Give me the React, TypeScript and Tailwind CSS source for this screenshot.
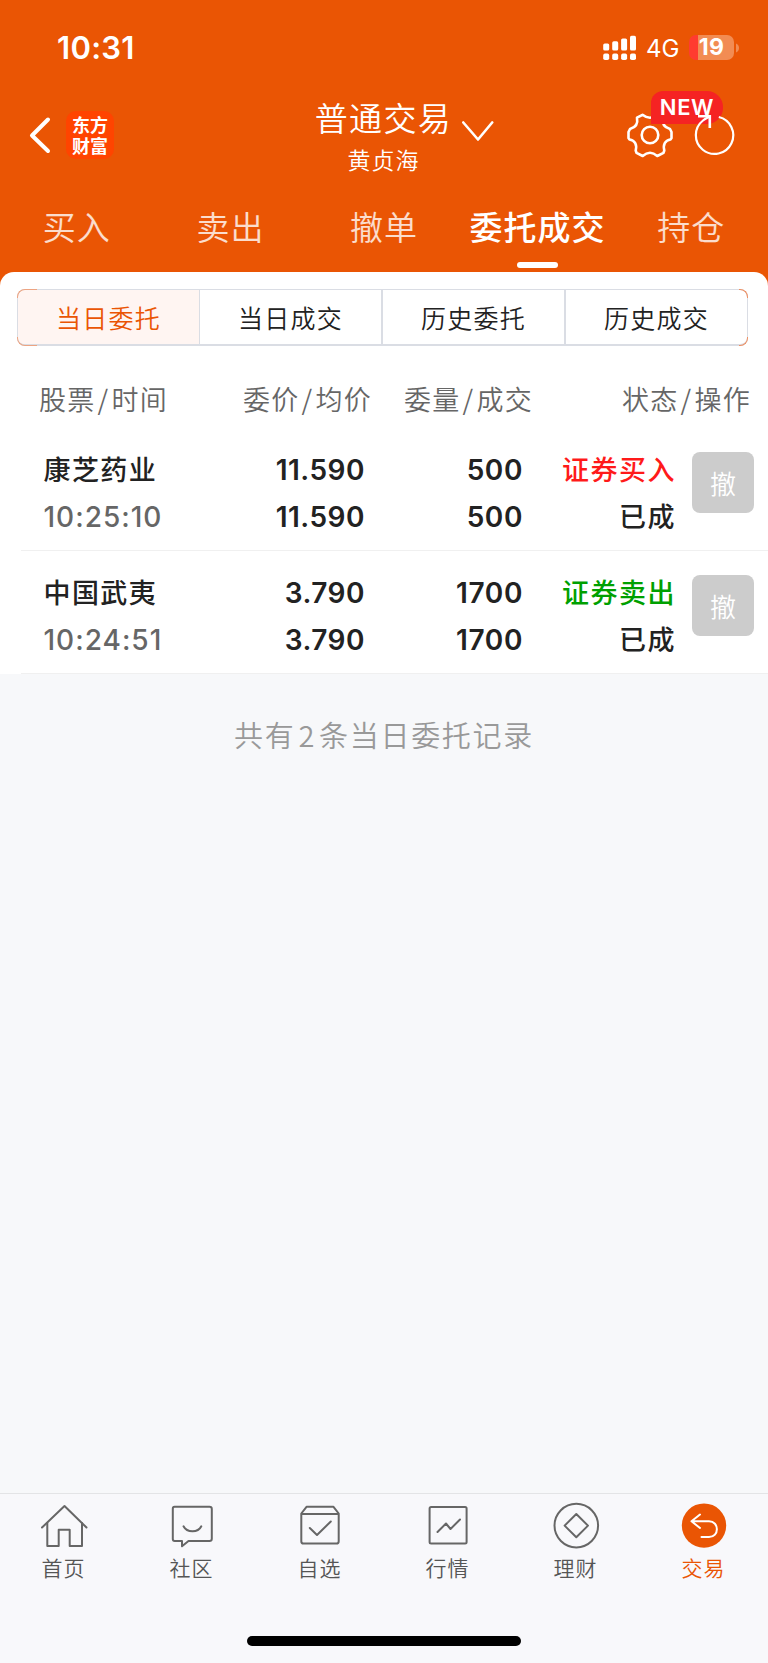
import React from "react";

const cjk = "font-['Noto_Sans_CJK_SC','Noto_Sans_CJK_TC',sans-serif]";
const latin = "font-['Inter','Noto_Sans_CJK_SC',sans-serif]";

function StatusBar() {
  return (
    <div className="flex h-[92px] items-start justify-between pl-[57px] pr-[29px] pt-[30px]">
      <span className={`${latin} text-[31px] leading-[36px] font-semibold tracking-[0.3px]`}>10:31</span>
      <div className="flex h-[36px] items-center">
        <svg className="block" width="34" height="26" viewBox="0 0 34 26" fill="#fff">
          <rect x="0.2" y="8.5" width="6" height="7" rx="1.6" />
          <rect x="9.2" y="6.3" width="6" height="9.2" rx="1.6" />
          <rect x="18.1" y="3.4" width="6" height="12.1" rx="1.6" />
          <rect x="27" y="0.8" width="6" height="14.7" rx="1.6" />
          <rect x="0.2" y="18.6" width="6" height="6.4" rx="1.8" />
          <rect x="9.2" y="18.6" width="6" height="6.4" rx="1.8" />
          <rect x="18.1" y="18.6" width="6" height="6.4" rx="1.8" />
          <rect x="27" y="18.6" width="6" height="6.4" rx="1.8" />
        </svg>
        <span className={`${latin} ml-[9px] mt-[2px] w-[35px] text-[24px] leading-[36px]`}>4G</span>
        <div className="ml-[8px] mb-[1px] flex h-[25px] w-[45px] items-center justify-center rounded-[7px] bg-[linear-gradient(90deg,#ff3b30_0_9px,#f28c53_9px)]">
          <span className={`${latin} text-[23px] leading-[25px] font-bold tracking-[0.2px]`}>19</span>
        </div>
        <svg className="ml-[2px] block" width="3" height="10" viewBox="0 0 3 10">
          <path d="M0 0.5C4 2 4 8 0 9.5Z" fill="#f28c53" />
        </svg>
      </div>
    </div>
  );
}

function TitleBar() {
  return (
    <div className="grid h-[98px] grid-cols-[290px_1fr_150px]">
      <div className="flex items-start">
        <svg className="ml-[28px] mt-[24px] block" width="24" height="38" viewBox="0 0 24 38" fill="none" stroke="#fff" strokeWidth="4" strokeLinecap="round" strokeLinejoin="round">
          <path d="M20 3.500L4 19.500L20 35" />
        </svg>
        <div className={`${cjk} ml-[14px] mt-[19px] flex h-[48px] w-[48px] items-center justify-center rounded-[10px] bg-[#ff4400] pb-[1px] text-center text-[18px] leading-[21px] font-bold`}>
          <p>
            东方
            <br />
            财富
          </p>
        </div>
      </div>
      <div className="flex items-start justify-end pr-[124px]">
        <div className="flex flex-col items-center">
          <span className={`${cjk} mt-[3px] text-[33px] leading-[44px] font-[350] tracking-[1.3px] whitespace-nowrap`}>普通交易</span>
          <span className={`${cjk} mt-[4px] text-[23px] leading-[32px] font-[350] tracking-[1px]`}>黄贞海</span>
        </div>
        <svg className="ml-[10px] mt-[28px] block shrink-0" width="32" height="22" viewBox="0 0 32 22" fill="none" stroke="#fff" strokeWidth="2.6" strokeLinecap="round" strokeLinejoin="round">
          <path d="M1.300 2.500L16 19.500L30.200 2.500" />
        </svg>
      </div>
      <div className="relative flex items-start pl-[8px] pt-[19px]">
        <svg className="block" width="48" height="48" viewBox="-24 -24 48 48" fill="none" stroke="#fff" strokeWidth="2.6" strokeLinejoin="round">
          <circle r="8.300" />
          <path d="M-7.500 -20.200Q0 -14.300 7.500 -20.200L13 -17.300C11.800 -11 14.500 -7.500 20 -6L21.500 -3V3L20.500 4.500C15 5.500 12.800 9.500 14.300 15.500L13.500 17.800L7.300 21Q0 14.500 -7.300 21L-13.500 17.800L-14.300 15.500C-12.800 9.500 -15 5.500 -20.500 4.500L-21.500 3V-3L-20 -6C-14.500 -7.500 -11.800 -11 -13 -17.300Z" />
        </svg>
        <span className={`${latin} absolute left-[33px] top-[-1px] flex h-[33px] w-[72px] items-center justify-center rounded-[16px] rounded-tl-[12px] rounded-bl-none bg-[#f52323] text-[22px] font-semibold tracking-[0.6px]`}>
          NEW
        </span>
        <svg className="relative ml-[16px] block" width="48" height="48" viewBox="-24 -24 48 48" fill="none" stroke="#fff" strokeWidth="2.2">
          <path d="M4.800 -18A18.700 18.700 0 1 1 -11 -14.500Q-8.500 -16.500 -4.200 -18.500" />
          <path d="M-16 -18.800H-4.200V-7" strokeWidth="2.6" />
        </svg>
      </div>
    </div>
  );
}

const tabs = ["买入", "卖出", "撤单", "委托成交", "持仓"];

function Tabs() {
  return (
    <div className={`${cjk} grid h-[82px] grid-cols-5`}>
      {tabs.map((t) => {
        const active = t === "委托成交";
        return (
          <div key={t} className="flex flex-col items-center pt-[14px]">
            <span className={`text-[33px] leading-[44px] tracking-[1px] whitespace-nowrap ${active ? "font-medium text-white" : "font-[350] text-white/80"}`}>{t}</span>
            {active && <span className="mt-[14px] h-[6px] w-[41px] rounded-[3px] bg-white" />}
          </div>
        );
      })}
    </div>
  );
}

const segments = ["当日委托", "当日成交", "历史委托", "历史成交"];

function Segments() {
  return (
    <div className="relative mr-[20px] ml-[17px]">
      <div className={`${cjk} grid h-[57px] grid-cols-[181px_182px_183px_1fr] overflow-hidden rounded-[8px] border border-b-2 border-[#dadde4] text-[25px] font-[350] tracking-[1.2px]`}>
        {segments.map((s, i) => (
          <div
            key={s}
            className={`flex items-center justify-center pt-[1px] ${i === 0 ? "bg-[#fff5f2] text-[#ea5504]" : i === 1 ? "border-l border-[#dadde4] text-[#222]" : "border-l-2 border-[#dadde4] text-[#222]"}`}
          >
            {s}
          </div>
        ))}
      </div>
      <span className="absolute left-0 top-0 h-[9px] w-[20px] rounded-tl-[8px] border-l border-t border-[#eda482]" />
      <span className="absolute bottom-0 left-0 h-[9px] w-[20px] rounded-bl-[8px] border-b border-l border-[#eda482]" />
      <span className="absolute right-0 top-0 h-[9px] w-[9px] rounded-tr-[8px] border-r border-t border-[#ee8f62]" />
      <span className="absolute bottom-0 right-0 h-[9px] w-[9px] rounded-br-[8px] border-b border-r border-[#ee8f62]" />
    </div>
  );
}

const columns: [string, string][] = [
  ["股票", "时间"],
  ["委价", "均价"],
  ["委量", "成交"],
  ["状态", "操作"],
];

function ListHeader() {
  return (
    <div className={`${cjk} grid grid-cols-[153px_1fr_161px_218px] pl-[39px] pr-[17px] text-[27px] leading-[40px] font-[350] tracking-[1.3px] text-[#666] whitespace-nowrap`}>
      {columns.map(([a, b], i) => (
        <span key={a} className={i === 0 ? "" : "text-right"}>
          {a}
          <span className="mx-[2px]">/</span>
          {b}
        </span>
      ))}
    </div>
  );
}

type Order = {
  name: string;
  time: string;
  price: string;
  volume: string;
  side: string;
  buy: boolean;
};

const orders: Order[] = [
  { name: "康芝药业", time: "10:25:10", price: "11.590", volume: "500", side: "证券买入", buy: true },
  { name: "中国武夷", time: "10:24:51", price: "3.790", volume: "1700", side: "证券卖出", buy: false },
];

function OrderRow({ o }: { o: Order }) {
  return (
    <div className="ml-[21px] flex h-[123px] border-b border-[#f0f0f0] pt-[17px] text-[#222]">
      <div className="flex w-[180px] flex-col pl-[22.5px]">
        <span className={`${cjk} text-[27px] leading-[47px] font-medium tracking-[1.4px]`}>{o.name}</span>
        <span className={`${latin} mt-[2px] text-[28px] leading-[47px] font-medium tracking-[1px] text-[#666]`}>{o.time}</span>
      </div>
      <div className={`${latin} flex w-[164px] flex-col pt-[2px] text-right text-[28px] leading-[47px] font-semibold tracking-[0.5px]`}>
        <span>{o.price}</span>
        <span>{o.price}</span>
      </div>
      <div className={`${latin} flex w-[158px] flex-col pt-[2px] text-right text-[28px] leading-[47px] font-semibold tracking-[0.6px]`}>
        <span>{o.volume}</span>
        <span>{o.volume}</span>
      </div>
      <div className={`${cjk} flex w-[153px] flex-col text-right text-[27px] leading-[47px] font-medium tracking-[1.5px]`}>
        <span className={o.buy ? "text-[#ff1a1a]" : "text-[#00a000]"}>{o.side}</span>
        <span>已成</span>
      </div>
      <button className={`${cjk} ml-[16px] mt-[7px] flex h-[61px] w-[62px] items-center justify-center rounded-[8px] bg-[#ccc] text-[26px] leading-[40px] font-[350] text-white`}>
        撤
      </button>
    </div>
  );
}

const stroke = {
  className: "block",
  width: 48,
  height: 48,
  viewBox: "0 0 48 48",
  fill: "none",
  stroke: "#666",
  strokeWidth: 2,
  strokeLinecap: "round" as const,
  strokeLinejoin: "round" as const,
};

const navItems = [
  {
    label: "首页",
    icon: (
      <svg {...stroke}>
        <path d="M2 25.500L24.500 4L46.500 25.500" />
        <path d="M7.300 21V44H18.700V27.700H29.700V44H42V21" />
      </svg>
    ),
  },
  {
    label: "社区",
    icon: (
      <svg {...stroke}>
        <path d="M6.500 4.800H41.500Q43.800 4.800 43.800 7V36.800Q43.800 39 41.500 39H20.500L14 44.300V39H6.700Q4.800 39 4.800 37V6.800Q4.800 4.800 6.500 4.800Z" />
        <path d="M15.500 24.300C19 31 30 31 33.300 24.300" />
      </svg>
    ),
  },
  {
    label: "自选",
    icon: (
      <svg {...stroke}>
        <path d="M5.300 11.500L10.500 4.800H37.500L42.700 11.500V39.200Q42.700 41.600 40.500 41.600H7.500Q5.300 41.600 5.300 39.200ZM5.300 12H42.700" />
        <path d="M13.800 26L21 33L34.800 19.500" />
      </svg>
    ),
  },
  {
    label: "行情",
    icon: (
      <svg {...stroke}>
        <rect x="5.600" y="5" width="37" height="36.600" rx="1.500" />
        <path d="M13.500 30L22 21.500L26.500 27L36 17.500" />
      </svg>
    ),
  },
  {
    label: "理财",
    icon: (
      <svg {...stroke}>
        <circle cx="24.300" cy="23.600" r="21.800" />
        <path d="M24.300 12L36 23.600L24.300 35.200L12.600 23.600Z" />
      </svg>
    ),
  },
  {
    label: "交易",
    icon: (
      <svg {...stroke} stroke="#fff">
        <circle cx="24" cy="23.600" r="22.200" fill="#ea5504" stroke="none" />
        <path d="M20 12.500L11.500 19.300L20 26M11.500 19.300H29C39.500 19.300 39.500 35 29 35H21.500" />
      </svg>
    ),
  },
];

function BottomNav() {
  return (
    <div className="h-[170px] border-t border-[#e3e4e6] bg-[#f8f8fb]">
      <div className={`${cjk} grid grid-cols-6 pt-[8px]`}>
        {navItems.map((n) => (
          <div key={n.label} className="flex flex-col items-center">
            {n.icon}
            <span className={`mt-[2px] mr-[1px] text-[21px] leading-[30px] font-[350] tracking-[1px] ${n.label === "交易" ? "text-[#ea5504]" : "text-[#555]"}`}>{n.label}</span>
          </div>
        ))}
      </div>
      <div className="mx-auto mt-[54px] h-[10px] w-[274px] rounded-full bg-black" />
    </div>
  );
}

export default function App() {
  return (
    <div className="flex h-[1663px] w-[768px] flex-col overflow-hidden bg-[#f7f8fa]">
      <div className="bg-[#ea5504] text-white">
        <StatusBar />
        <TitleBar />
        <Tabs />
        <div className="rounded-t-[14px] bg-white pt-[17px]">
          <Segments />
        </div>
      </div>
      <div className="bg-white pt-[33px]">
        <ListHeader />
        <div className="pt-[9px]">
          {orders.map((o) => (
            <OrderRow key={o.name} o={o} />
          ))}
        </div>
      </div>
      <p className={`${cjk} mt-[38px] text-center text-[29px] leading-[44px] font-[350] tracking-[1.7px] text-[#999]`}>
        共有<span className="mx-[3px]">2</span>条当日委托记录
      </p>
      <div className="flex-1" />
      <BottomNav />
    </div>
  );
}
